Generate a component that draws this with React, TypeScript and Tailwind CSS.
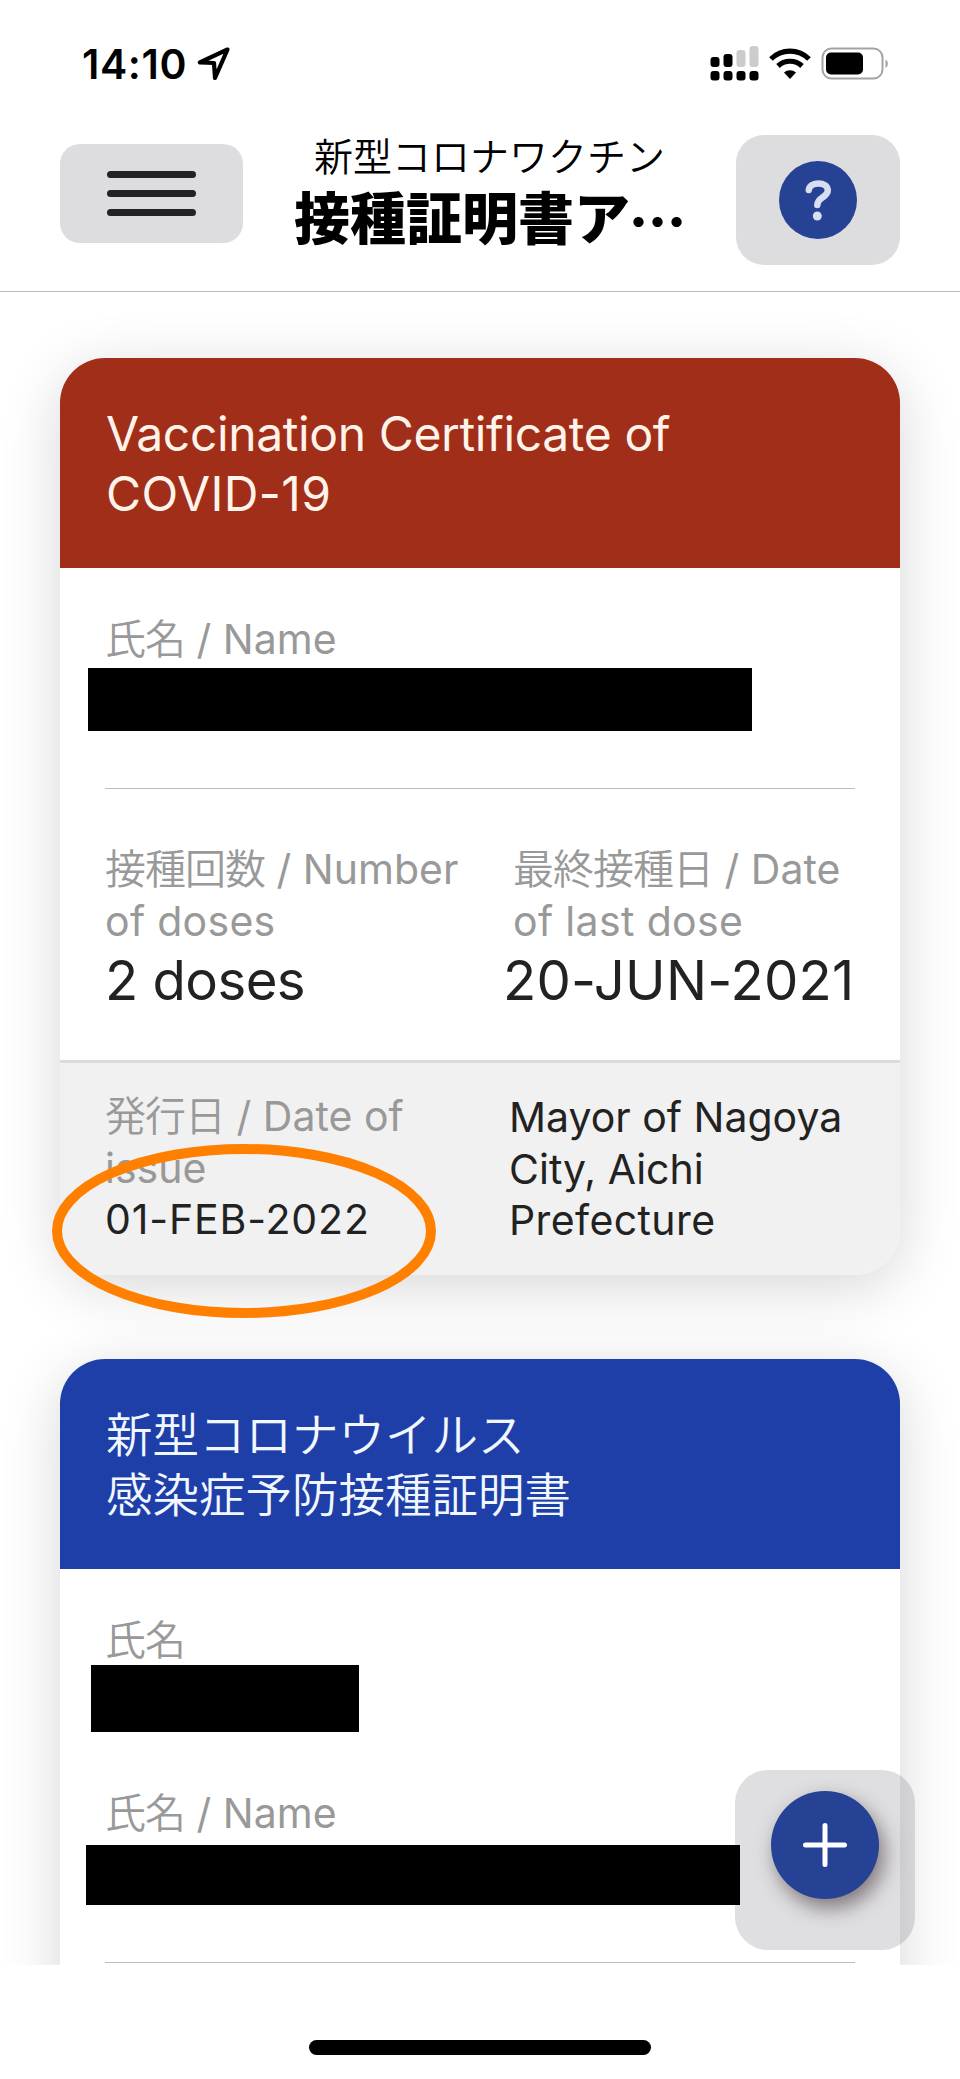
import React from 'react';

const Jp: React.FC<{ children: React.ReactNode }> = ({ children }) => (
  <span className="font-[350] tracking-[-1px]">{children}</span>
);

const StatusBar = () => (
  <div className="flex h-[126px] items-start justify-between pt-[40px] pl-[82px] pr-[70px]">
    <div className="flex items-center gap-[10px]">
      <span className="text-[41px] leading-[48px] font-semibold tracking-[0.6px]">14:10</span>
      <svg width="34" height="34" viewBox="0 0 34 34" fill="none" stroke="black" strokeWidth="4.2" strokeLinejoin="round">
        <path d="M30.5 2.500 L2.8 15.300 L17 16 L18 31 Z" />
      </svg>
    </div>
    <div className="flex pt-[6px]">
      <svg width="180" height="36" viewBox="0 0 180 36">
        <rect x="0.500" y="11" width="9" height="10" rx="3" />
        <rect x="13.500" y="8" width="9" height="13" rx="3" />
        <rect x="26.500" y="4" width="9" height="17" rx="3" fill="#cccccc" />
        <rect x="39.500" y="0" width="9" height="21" rx="3" fill="#cccccc" />
        <rect x="0.500" y="25" width="9" height="9.500" rx="3" />
        <rect x="13.500" y="25" width="9" height="9.500" rx="3" />
        <rect x="26.500" y="25" width="9" height="9.500" rx="3" />
        <rect x="39.500" y="25" width="9" height="9.500" rx="3" />
        <g fill="none" stroke="black" strokeWidth="5.2">
          <path d="M61 13 A27 27 0 0 1 99 13" />
          <path d="M68 20 A17.5 17.5 0 0 1 92 20" />
        </g>
        <path d="M80 33 L74 26.500 A9 9 0 0 1 86 26.500 Z" />
        <rect x="112.500" y="2.500" width="60" height="30" rx="9" fill="none" stroke="#a3a3a3" strokeWidth="2" />
        <rect x="116" y="6.500" width="37" height="22" rx="5" />
        <path d="M175.500 13.500 A5 5 0 0 1 175.500 22 Z" fill="#a3a3a3" />
      </svg>
    </div>
  </div>
);

const Header = () => (
  <header className="h-[292px] border-b border-[#bcbcbc] bg-white">
    <StatusBar />
    <div className="flex items-start justify-between px-[60px]">
      <button className="mt-[18px] flex h-[99px] w-[183px] flex-col items-center justify-center gap-[12px] rounded-[20px] bg-[#dddddf]">
        <span className="h-[7px] w-[89px] rounded-full bg-[#232325]" />
        <span className="h-[7px] w-[89px] rounded-full bg-[#232325]" />
        <span className="h-[7px] w-[89px] rounded-full bg-[#232325]" />
      </button>
      <div className="pt-[5px] text-center">
        <p className="text-[39px] leading-[52px] font-[350]">新型コロナワクチン</p>
        <h1 className="-mt-px text-[56px] leading-[70px] font-black">
          接種証明書ア
          <span className="-ml-px inline-block w-[56px] align-[13px] text-[51px] leading-none">…</span>
        </h1>
      </div>
      <button className="mt-[9px] flex h-[130px] w-[164px] items-center justify-center rounded-[28px] bg-[#dddddf]">
        <svg width="78" height="78" viewBox="0 0 78 78">
          <circle cx="39" cy="39" r="39" fill="#254294" />
          <path d="M29.800 29 C30.500 20.500 48.800 20 48.800 29.500 C48.800 36.500 38.300 36 38.300 44" fill="none" stroke="#d9def0" strokeWidth="6.500" strokeLinecap="round" />
          <circle cx="38.300" cy="55" r="4.500" fill="#d9def0" />
        </svg>
      </button>
    </div>
  </header>
);

const cardClass = 'overflow-hidden rounded-[45px] bg-white shadow-[0_12px_60px_rgba(0,0,0,0.16)]';
const labelClass = 'text-[41px] leading-[52px] text-[#999999]';

const CertificateEn = () => (
  <section className={cardClass}>
    <h2 className="h-[210px] bg-[#a02e18] px-[46px] pt-[46px] text-[48px] leading-[60px] text-[#fff3ea]">
      <span className="tracking-[-0.38px]">Vaccination Certificate of</span>
      <br />
      <span className="tracking-[0.4px]">COVID-19</span>
    </h2>
    <div className="px-[45px] pt-[45px] pb-[48px]">
      <p className={labelClass}><Jp>氏名</Jp> / Name</p>
      <div className="mt-[3px] -ml-[17px] h-[63px] w-[664px] bg-black" />
      <div className="mt-[57px] h-px bg-[#bdbdbd]" />
      <div className="mt-[54px] flex">
        <div className="w-[408px]">
          <p className={labelClass}>
            <Jp>接種回数</Jp> / Number<br />
            <span className="tracking-[0.3px]">of doses</span>
          </p>
          <p className="mt-px text-[54.5px] leading-[64px] tracking-[-0.55px] text-[#222222]">2 doses</p>
        </div>
        <div className="whitespace-nowrap">
          <p className={labelClass}>
            <Jp>最終接種日</Jp> / Date<br />
            <span className="tracking-[0.35px]">of last dose</span>
          </p>
          <p className="mt-px -ml-[10px] text-[54.5px] leading-[64px] tracking-[0.2px] text-[#222222]">20-JUN-2021</p>
        </div>
      </div>
    </div>
    <div className="flex h-[215px] border-t-[3px] border-[#dadcdb] bg-[#f1f1f1] px-[45px] pt-[28px] text-[41px] leading-[51.5px] text-[#222222]">
      <div className="w-[404px]">
        <p className="text-[#999999]"><Jp>発行日</Jp> / Date of<br />issue</p>
        <p className="tracking-[0.85px]">01-FEB-2022</p>
      </div>
      <p className="pt-px whitespace-nowrap">
        Mayor of Nagoya<br />
        City, Aichi<br />
        <span className="tracking-[0.4px]">Prefecture</span>
      </p>
    </div>
  </section>
);

const CertificateJp = () => (
  <section className={cardClass}>
    <h2 className="h-[210px] bg-[#1f3fa8] px-[46px] pt-[46px] text-[46.5px] leading-[60px] font-[350] text-[#f0f7ff]">
      新型コロナウイルス
      <br />
      感染症予防接種証明書
    </h2>
    <div className="h-[600px] px-[45px] pt-[45px]">
      <p className={labelClass}><Jp>氏名</Jp></p>
      <div className="-mt-px -ml-[14px] h-[67px] w-[268px] bg-black" />
      <p className={`mt-[55px] ${labelClass}`}><Jp>氏名</Jp> / Name</p>
      <div className="relative z-20 mt-[6px] -ml-[19px] h-[60px] w-[654px] bg-black" />
      <div className="mt-[57px] h-px bg-[#bdbdbd]" />
    </div>
  </section>
);

const AddButton = () => (
  <button className="absolute top-[1478px] left-[735px] z-10 flex h-[180px] w-[180px] justify-center rounded-[33px] bg-[#60606a]/20 pt-[21px]">
    <span className="flex h-[108px] w-[108px] items-center justify-center rounded-full bg-[#254294] shadow-[5px_9px_20px_rgba(50,35,40,0.55)]">
      <svg width="44" height="44" viewBox="0 0 44 44" stroke="white" strokeWidth="5" strokeLinecap="round">
        <path d="M22 2.500 V41.500 M2.500 22 H41.500" />
      </svg>
    </span>
  </button>
);

const App: React.FC = () => {
  return (
    <div className="h-[2079px] w-[960px] overflow-hidden bg-white font-['Inter','Noto_Sans_CJK_JP',sans-serif] text-black" lang="ja">
      <Header />
      <main className="relative h-[1673px] overflow-hidden px-[60px] pt-[66px]">
        <div className="flex flex-col gap-[84px]">
          <CertificateEn />
          <CertificateJp />
        </div>
        <svg className="absolute top-[852px] left-[52px]" width="384" height="174" viewBox="0 0 384 174">
          <ellipse cx="192" cy="87" rx="187" ry="82" fill="none" stroke="#ff8000" strokeWidth="10" />
        </svg>
        <AddButton />
      </main>
      <div className="flex justify-center pt-[75px]">
        <div className="h-[15px] w-[342px] rounded-full bg-black" />
      </div>
    </div>
  );
};

export default App;
